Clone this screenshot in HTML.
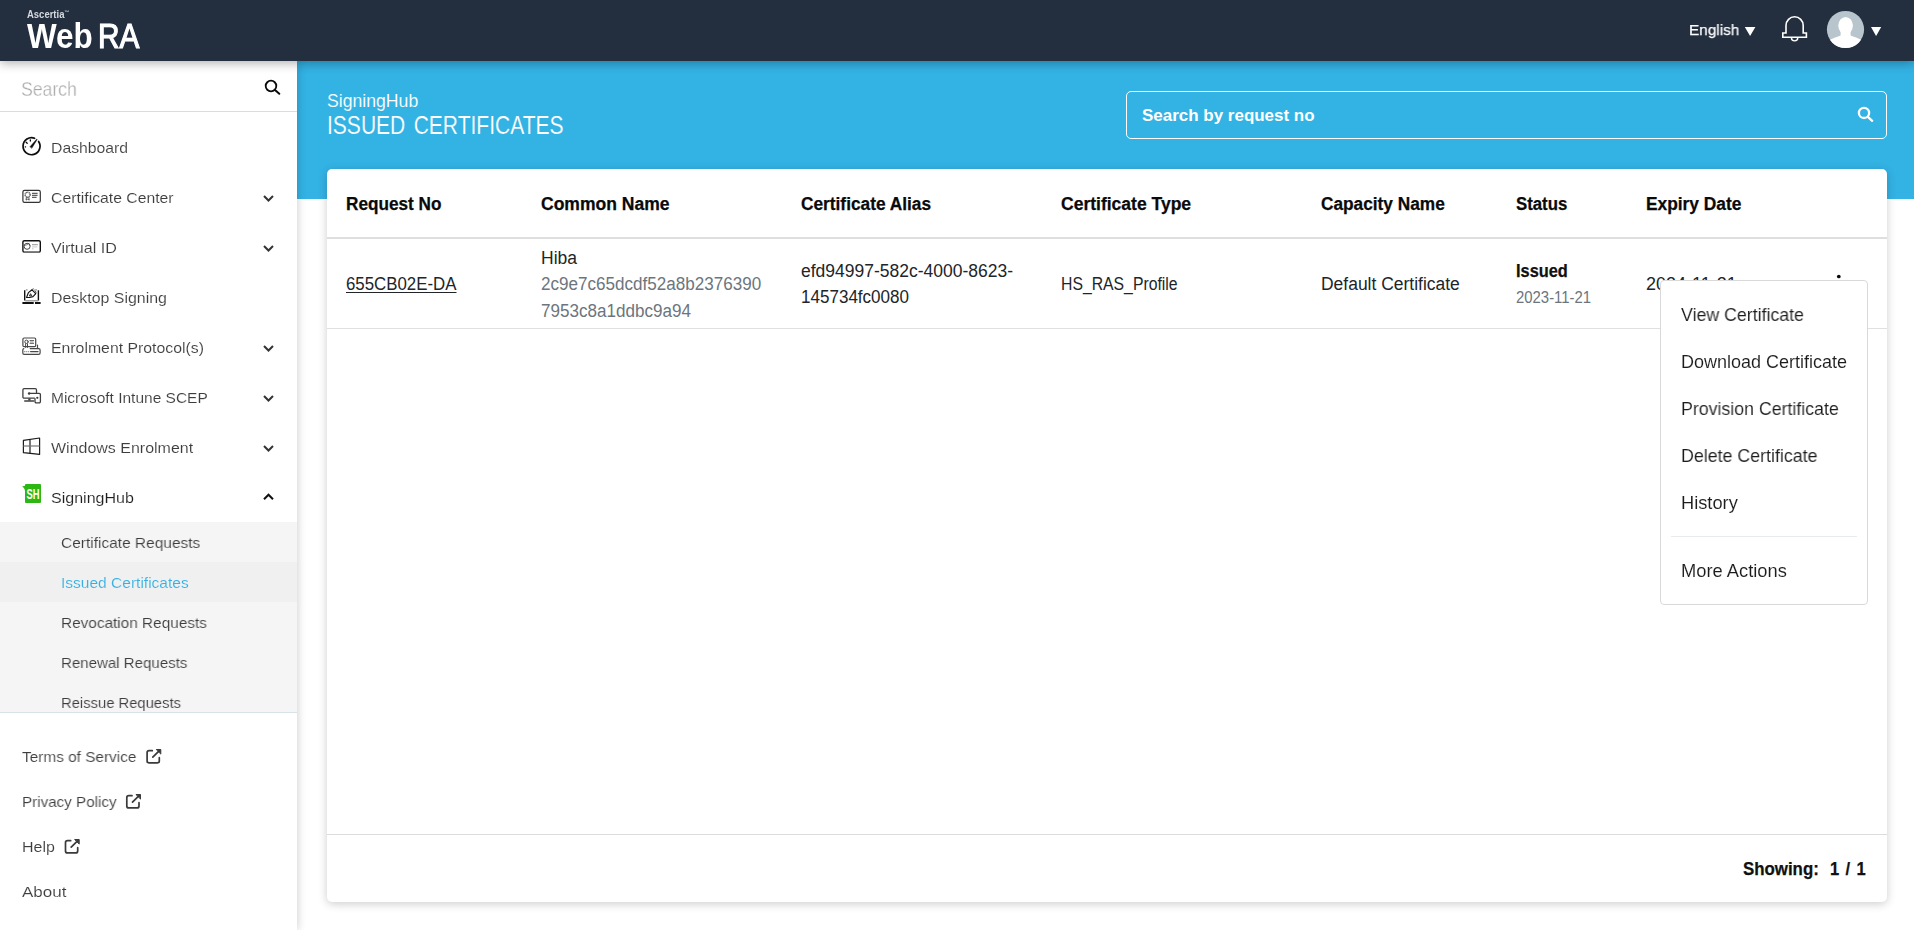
<!DOCTYPE html>
<html lang="en">
<head>
<meta charset="utf-8">
<title>WebRA - Issued Certificates</title>
<style>
html,body{margin:0;padding:0;}
body{width:1914px;height:930px;overflow:hidden;background:#fff;position:relative;font-family:"Liberation Sans",sans-serif;}
.abs{position:absolute;}
.t{position:absolute;white-space:pre;font-family:"Liberation Sans",sans-serif;}
#blue{left:297px;top:61px;width:1617px;height:138px;background:#33b2e4;}
#side{left:0;top:61px;width:297px;height:869px;background:#fff;box-shadow:0 0 9px rgba(0,0,0,.22);}
#hdr{left:0;top:0;width:1914px;height:61px;background:#232e3f;box-shadow:0 2px 10px rgba(0,0,0,.32);}
#sline{left:0;top:111px;width:297px;height:1px;background:#dcdcdc;}
#sub{left:0;top:522px;width:297px;height:190px;background:#f5f5f5;}
#subact{left:0;top:562px;width:297px;height:40px;background:#f0f0f0;}
#subline{left:0;top:712px;width:297px;height:1px;background:#d8e2e9;}
#card{left:327px;top:169px;width:1560px;height:733px;background:#fff;border-radius:5px;box-shadow:0 2px 10px rgba(0,0,0,.2);}
#thline{left:327px;top:237px;width:1560px;height:2px;background:#dedede;}
#trline{left:327px;top:328px;width:1560px;height:1px;background:#e0e0e0;}
#ftline{left:327px;top:834px;width:1560px;height:1px;background:#dcdcdc;}
#sbox{left:1126px;top:91px;width:759px;height:46px;border:1px solid #fff;border-radius:5px;}
#dd{left:1660px;top:280px;width:206px;height:323px;background:#fff;border:1px solid #d9d9d9;border-radius:4px;}
#ddline{left:1671px;top:536px;width:186px;height:1px;background:#e9ecef;}
svg{position:absolute;overflow:visible;}
</style>
</head>
<body>
<main>
<div id="blue" class="abs"></div>
<section id="card" class="abs"></section>
<div id="thline" class="abs"></div>
<div id="trline" class="abs"></div>
<div id="ftline" class="abs"></div>
<div id="sbox" class="abs"></div>
<svg class="abs" style="left:0;top:0" width="1914" height="930" viewBox="0 0 1914 930" fill="none">
<!-- main search icon -->
<g stroke="#fff" stroke-width="2.300" stroke-linecap="round">
<circle cx="1864" cy="112.900" r="5.100"/>
<path d="M1867.900 116.800l4.300 4"/>
</g>
<!-- kebab -->
<g fill="#0a0a0a"><circle cx="1838.800" cy="276.500" r="1.850"/><circle cx="1838.800" cy="282.300" r="1.850"/><circle cx="1838.800" cy="288.100" r="1.850"/></g>
</svg>
<span class="t" style="left:327.4px;top:88px;font-size:18.3px;line-height:26px;font-weight:400;color:#fff;letter-spacing:0.00px;transform:scaleX(0.9648);transform-origin:0 0;-webkit-text-stroke:.12px #33b2e4;">SigningHub</span>
<span class="t" style="left:327.4px;top:108px;font-size:25.2px;line-height:35px;font-weight:400;color:#fff;letter-spacing:0.00px;transform:scaleX(0.8349);transform-origin:0 0;-webkit-text-stroke:.15px #33b2e4;word-spacing:3px;">ISSUED CERTIFICATES</span>
<span class="t" style="left:1142.4px;top:104px;font-size:16.6px;line-height:23px;font-weight:700;color:#fff;letter-spacing:0.00px;transform:scaleX(1.0227);transform-origin:0 0;">Search by request no</span>
<span class="t" style="left:346.3px;top:192px;font-size:17.6px;line-height:25px;font-weight:700;color:#0a0a0a;letter-spacing:0.00px;transform:scaleX(0.9758);transform-origin:0 0;-webkit-text-stroke:.25px #0a0a0a;">Request No</span>
<span class="t" style="left:541.2px;top:192px;font-size:17.6px;line-height:25px;font-weight:700;color:#0a0a0a;letter-spacing:0.00px;transform:scaleX(0.9958);transform-origin:0 0;-webkit-text-stroke:.25px #0a0a0a;">Common Name</span>
<span class="t" style="left:801.1px;top:192px;font-size:17.6px;line-height:25px;font-weight:700;color:#0a0a0a;letter-spacing:0.00px;transform:scaleX(0.9823);transform-origin:0 0;-webkit-text-stroke:.25px #0a0a0a;">Certificate Alias</span>
<span class="t" style="left:1061.1px;top:192px;font-size:17.6px;line-height:25px;font-weight:700;color:#0a0a0a;letter-spacing:0.00px;transform:scaleX(0.9954);transform-origin:0 0;-webkit-text-stroke:.25px #0a0a0a;">Certificate Type</span>
<span class="t" style="left:1321.2px;top:192px;font-size:17.6px;line-height:25px;font-weight:700;color:#0a0a0a;letter-spacing:0.00px;transform:scaleX(0.9813);transform-origin:0 0;-webkit-text-stroke:.25px #0a0a0a;">Capacity Name</span>
<span class="t" style="left:1516.1px;top:192px;font-size:17.6px;line-height:25px;font-weight:700;color:#0a0a0a;letter-spacing:0.00px;transform:scaleX(0.9539);transform-origin:0 0;-webkit-text-stroke:.25px #0a0a0a;">Status</span>
<span class="t" style="left:1646.0px;top:192px;font-size:17.6px;line-height:25px;font-weight:700;color:#0a0a0a;letter-spacing:0.00px;transform:scaleX(0.9854);transform-origin:0 0;-webkit-text-stroke:.25px #0a0a0a;">Expiry Date</span>
<span class="t" style="left:346.1px;top:272px;font-size:18px;line-height:25px;font-weight:400;color:#212529;letter-spacing:0.00px;transform:scaleX(0.9358);transform-origin:0 0;text-decoration:underline;text-underline-offset:2px;">655CB02E-DA</span>
<span class="t" style="left:541.2px;top:246px;font-size:18px;line-height:25px;font-weight:400;color:#212529;letter-spacing:0.00px;transform:scaleX(0.9722);transform-origin:0 0;">Hiba</span>
<span class="t" style="left:541.2px;top:272px;font-size:18px;line-height:25px;font-weight:400;color:#6c757d;letter-spacing:0.00px;transform:scaleX(0.9487);transform-origin:0 0;">2c9e7c65dcdf52a8b2376390</span>
<span class="t" style="left:541.2px;top:299px;font-size:18px;line-height:25px;font-weight:400;color:#6c757d;letter-spacing:0.00px;transform:scaleX(0.9478);transform-origin:0 0;">7953c8a1ddbc9a94</span>
<span class="t" style="left:801.1px;top:259px;font-size:18px;line-height:25px;font-weight:400;color:#212529;letter-spacing:0.00px;transform:scaleX(0.9717);transform-origin:0 0;">efd94997-582c-4000-8623-</span>
<span class="t" style="left:801.1px;top:285px;font-size:18px;line-height:25px;font-weight:400;color:#212529;letter-spacing:0.00px;transform:scaleX(0.9465);transform-origin:0 0;">145734fc0080</span>
<span class="t" style="left:1061.1px;top:272px;font-size:18px;line-height:25px;font-weight:400;color:#212529;letter-spacing:0.00px;transform:scaleX(0.8763);transform-origin:0 0;">HS_RAS_Profile</span>
<span class="t" style="left:1321.2px;top:272px;font-size:18px;line-height:25px;font-weight:400;color:#212529;letter-spacing:0.00px;transform:scaleX(0.9702);transform-origin:0 0;">Default Certificate</span>
<span class="t" style="left:1516.1px;top:259px;font-size:18px;line-height:25px;font-weight:700;color:#111;letter-spacing:0.00px;transform:scaleX(0.9083);transform-origin:0 0;-webkit-text-stroke:.25px #111;">Issued</span>
<span class="t" style="left:1516.1px;top:286px;font-size:16.2px;line-height:23px;font-weight:400;color:#6c757d;letter-spacing:0.00px;transform:scaleX(0.9202);transform-origin:0 0;">2023-11-21</span>
<span class="t" style="left:1646.0px;top:272px;font-size:18px;line-height:25px;font-weight:400;color:#212529;letter-spacing:0.00px;transform:scaleX(0.9994);transform-origin:0 0;">2024-11-21</span>
<span class="t" style="left:1743.2px;top:857px;font-size:18px;line-height:25px;font-weight:700;color:#111;letter-spacing:0.00px;transform:scaleX(0.9360);transform-origin:0 0;-webkit-text-stroke:.25px #111;">Showing:</span>
<span class="t" style="left:1829.9px;top:857px;font-size:18px;line-height:25px;font-weight:700;color:#111;letter-spacing:0.00px;transform:scaleX(0.9172);transform-origin:0 0;-webkit-text-stroke:.25px #111;word-spacing:2px;">1 / 1</span>
</main>
<aside>
<div id="side" class="abs"></div>
<div id="sline" class="abs"></div>
<div id="sub" class="abs"></div>
<div id="subact" class="abs"></div>
<div id="subline" class="abs"></div>
<svg class="abs" style="left:0;top:0" width="1914" height="930" viewBox="0 0 1914 930" fill="none">
<!-- dashboard -->
<g stroke="#0d0d0d" stroke-width="1.700" stroke-linecap="round">
<path d="M38.600 141.450A8.500 8.500 0 1 1 34.600 138.260"/>
<path d="M29.980 146.690L36.760 139.020 37.240 139.380 31.920 148.110z" fill="#0d0d0d" stroke-width=".400" stroke-linejoin="round"/>
<path d="M30.350 139.800v1.300M26.100 142.300l1.100 1" stroke-width="1.300"/>
<circle cx="25.400" cy="146.900" r=".800" fill="#444" stroke="none"/>
</g>
<!-- certificate center -->
<g stroke="#333" stroke-width="1.2">
<rect x="22.900" y="190.300" width="17.400" height="12" rx="1.600"/>
<circle cx="27.600" cy="194.700" r="2.500" stroke-width="1.400" stroke-dasharray="1.100 .500" stroke="#555"/>
<path d="M26.500 197.200l-.500 2.900 1.600-.900 1.600.900-.500-2.900" stroke-width=".900" stroke="#444"/>
<path d="M32 193.300h5.600M32 195.300h5.600M32 197.300h4.600" stroke-width=".900" stroke="#222"/>
</g>
<!-- virtual id -->
<g stroke="#111" stroke-width="1.400">
<rect x="22.900" y="240.700" width="17.400" height="11.400" rx="1.400"/>
<path d="M23.600 252.300h16" stroke-width="1.200" stroke="#777"/>
<circle cx="27.100" cy="246.300" r="3" stroke-width=".900" stroke="#333"/>
<path d="M24.300 245.400c1.600-.100 3.400-.800 4.800-2.200M29 243.400c.400 1 .900 1.600 1.100 2.400" stroke-width=".700" stroke="#444"/>
<path d="M32 244.700h5.800" stroke="#888" stroke-width=".900"/>
<path d="M32 246.900h5.400M32 248.800h1.600" stroke="#bbb" stroke-width=".800"/>
</g>
<!-- desktop signing -->
<g stroke="#111" stroke-width="1.3">
<path d="M27.600 289.900h-1.800" stroke="#999"/>
<path d="M35.200 289.900h1.800" stroke="#999"/>
<path d="M24.700 290.200v10.200M38.400 290.200v10.200" stroke-width="1.400"/>
<path d="M25.200 300.800h13" stroke="#8a8a8a" stroke-width="1.200"/>
<path d="M22.400 303h11.300M35 303h5.600" stroke-width="1.900"/>
<path d="M26.600 297.400l1.800-4.800 3.600-2.800 3.800 3.800-2.800 3-3.400.9z" stroke-width="1.200" stroke-linejoin="round"/>
<path d="M32 289.800l1.200-1.300 3.200 4-1.300.9" stroke-width=".9" stroke-dasharray="1 .7"/>
<path d="M29.500 296l1-2.300 1.300 2z" stroke-width=".9"/>
</g>
<!-- enrolment protocols -->
<g stroke="#484848" stroke-width="1.2" stroke-linecap="round">
<rect x="22.9" y="338" width="12.800" height="8.600" rx="1.200"/>
<circle cx="26.500" cy="341.800" r="1.700" stroke-width="1"/>
<path d="M25.600 343.800v3.600M27.500 343.800v3.600" stroke-width="1"/>
<rect x="30" y="340.400" width="3.600" height="3" fill="#c4c4c4" stroke="none"/>
<path d="M30 340.500h3.600M30 343.400h3.600" stroke-width="1" stroke="#666"/>
<path d="M30.200 348.600H38.700a1.400 1.400 0 0 1 1.400 1.400v3a1.400 1.400 0 0 1-1.400 1.400H24.200a1.400 1.400 0 0 1-1.400-1.400v-3a1.400 1.400 0 0 1 1-1.350"/>
<path d="M37.500 345v3.500"/>
<path d="M24.300 351.600h.5M26.200 351.600h.5M28.200 351.600h.6" stroke="#999" stroke-width="1.100"/>
<path d="M30.600 351.600h7.400" stroke-width="1.300"/>
</g>
<!-- intune -->
<g stroke="#3f3f3f" stroke-width="1.300" stroke-linecap="round">
<path d="M36.500 392.400v-2.500a1.200 1.200 0 0 0-1.200-1.200H24.100a1.200 1.200 0 0 0-1.200 1.200v7a1.200 1.200 0 0 0 1.200 1.200H34.400"/>
<path d="M29.400 398.500v2" stroke-width="2.300" stroke-linecap="butt"/>
<path d="M24.800 401h8.800" stroke-width="1.600"/>
<path d="M29.100 393.400H39.200a1.200 1.200 0 0 1 1.200 1.200v7a1.200 1.200 0 0 1-1.200 1.200H36.200a1.200 1.200 0 0 1-1.200-1.200V398.600"/>
<circle cx="29.100" cy="393.400" r="1.250" fill="#3f3f3f" stroke="none"/>
<circle cx="37.300" cy="397.800" r="1.150" fill="#3f3f3f" stroke="none"/>
</g>
<!-- windows -->
<g stroke="#1c1c1c" stroke-width="1.2" stroke-linejoin="round">
<path d="M23.4 440.4L39.6 438v16.4l-16.2-1.7z"/>
<path d="M30 439.5v14"/>
<path d="M23.4 446h16.2" stroke="#777"/>
</g>
<!-- signinghub -->
<path d="M22 486.6l3-.9v5.4c-.3-2-1.200-3.600-3-4.500z" fill="#2db712"/>
<rect x="25" y="484" width="16" height="19" rx="1" fill="#2db712"/>
<text x="26.500" y="498.800" font-family="Liberation Sans, sans-serif" font-weight="700" font-size="14.500" fill="#fff" textLength="13" lengthAdjust="spacingAndGlyphs">SH</text>
<!-- chevrons -->
<g stroke="#333" stroke-width="2" stroke-linejoin="miter">
<path d="M264 196l4.500 4.500 4.500-4.500"/>
<path d="M264 246l4.500 4.500 4.500-4.500"/>
<path d="M264 346l4.500 4.500 4.500-4.500"/>
<path d="M264 396l4.500 4.500 4.500-4.500"/>
<path d="M264 446l4.500 4.500 4.500-4.500"/>
<path d="M264 499.200l4.500-4.500 4.500 4.500" stroke="#111"/>
</g>
<!-- sidebar search icon -->
<g stroke="#0a0a0a" stroke-width="1.800" stroke-linecap="round">
<circle cx="271" cy="86" r="5.300"/>
<path d="M275 90l4.300 3.800" stroke-width="2"/>
</g>
<!-- external link icons -->
<g id="ext" stroke="#3a3a3a" stroke-width="1.700" stroke-linecap="round" stroke-linejoin="round">
<path d="M152.300 750.700h-3.200a2 2 0 0 0-2 2v8.200a2 2 0 0 0 2 2h8.200a2 2 0 0 0 2-2v-3.200"/>
<path d="M152.800 757.200l6.600-6.600"/>
<path d="M156.600 749.500h4.200v4.200z" fill="#3a3a3a" stroke-width="1"/>
</g>
<use href="#ext" x="-20.300" y="45"/>
<use href="#ext" x="-81.600" y="90"/>
</svg>
<nav>
<span class="t" style="left:51.1px;top:137px;font-size:15.5px;line-height:22px;font-weight:400;color:#3d3d3d;letter-spacing:0.00px;transform:scaleX(1.0168);transform-origin:0 0;-webkit-text-stroke:.12px #fff;will-change:transform;">Dashboard</span>
<span class="t" style="left:51.1px;top:187px;font-size:15.5px;line-height:22px;font-weight:400;color:#3d3d3d;letter-spacing:0.00px;transform:scaleX(1.0165);transform-origin:0 0;-webkit-text-stroke:.12px #fff;will-change:transform;">Certificate Center</span>
<span class="t" style="left:51.1px;top:237px;font-size:15.5px;line-height:22px;font-weight:400;color:#3d3d3d;letter-spacing:0.00px;transform:scaleX(1.0367);transform-origin:0 0;-webkit-text-stroke:.12px #fff;will-change:transform;">Virtual ID</span>
<span class="t" style="left:51.1px;top:287px;font-size:15.5px;line-height:22px;font-weight:400;color:#3d3d3d;letter-spacing:0.00px;transform:scaleX(1.0268);transform-origin:0 0;-webkit-text-stroke:.12px #fff;will-change:transform;">Desktop Signing</span>
<span class="t" style="left:51.1px;top:337px;font-size:15.5px;line-height:22px;font-weight:400;color:#3d3d3d;letter-spacing:0.00px;transform:scaleX(1.0201);transform-origin:0 0;-webkit-text-stroke:.12px #fff;will-change:transform;">Enrolment Protocol(s)</span>
<span class="t" style="left:51.1px;top:387px;font-size:15.5px;line-height:22px;font-weight:400;color:#3d3d3d;letter-spacing:0.00px;transform:scaleX(1.0000);transform-origin:0 0;-webkit-text-stroke:.12px #fff;will-change:transform;">Microsoft Intune SCEP</span>
<span class="t" style="left:51.1px;top:437px;font-size:15.5px;line-height:22px;font-weight:400;color:#3d3d3d;letter-spacing:0.00px;transform:scaleX(1.0310);transform-origin:0 0;-webkit-text-stroke:.12px #fff;will-change:transform;">Windows Enrolment</span>
<span class="t" style="left:51.1px;top:487px;font-size:15.5px;line-height:22px;font-weight:400;color:#1f1f1f;letter-spacing:0.00px;transform:scaleX(1.0342);transform-origin:0 0;-webkit-text-stroke:.12px #fff;will-change:transform;">SigningHub</span>
<span class="t" style="left:61.0px;top:532px;font-size:15.5px;line-height:22px;font-weight:400;color:#3d3d3d;letter-spacing:0.00px;transform:scaleX(0.9974);transform-origin:0 0;-webkit-text-stroke:.12px #f5f5f5;will-change:transform;">Certificate Requests</span>
<span class="t" style="left:61.0px;top:572px;font-size:15.5px;line-height:22px;font-weight:400;color:#35b0e2;letter-spacing:0.00px;transform:scaleX(1.0016);transform-origin:0 0;-webkit-text-stroke:.12px #f0f0f0;will-change:transform;">Issued Certificates</span>
<span class="t" style="left:61.0px;top:612px;font-size:15.5px;line-height:22px;font-weight:400;color:#3d3d3d;letter-spacing:0.00px;transform:scaleX(0.9902);transform-origin:0 0;-webkit-text-stroke:.12px #f5f5f5;will-change:transform;">Revocation Requests</span>
<span class="t" style="left:61.0px;top:652px;font-size:15.5px;line-height:22px;font-weight:400;color:#3d3d3d;letter-spacing:0.00px;transform:scaleX(0.9715);transform-origin:0 0;-webkit-text-stroke:.12px #f5f5f5;will-change:transform;">Renewal Requests</span>
<span class="t" style="left:61.0px;top:692px;font-size:15.5px;line-height:22px;font-weight:400;color:#3d3d3d;letter-spacing:0.00px;transform:scaleX(0.9539);transform-origin:0 0;-webkit-text-stroke:.12px #f5f5f5;will-change:transform;">Reissue Requests</span>
<span class="t" style="left:21.8px;top:746px;font-size:15.5px;line-height:22px;font-weight:400;color:#3d3d3d;letter-spacing:0.00px;transform:scaleX(0.9920);transform-origin:0 0;-webkit-text-stroke:.12px #fff;will-change:transform;">Terms of Service</span>
<span class="t" style="left:21.8px;top:791px;font-size:15.5px;line-height:22px;font-weight:400;color:#3d3d3d;letter-spacing:0.00px;transform:scaleX(0.9806);transform-origin:0 0;-webkit-text-stroke:.12px #fff;will-change:transform;">Privacy Policy</span>
<span class="t" style="left:21.8px;top:836px;font-size:15.5px;line-height:22px;font-weight:400;color:#3d3d3d;letter-spacing:0.00px;transform:scaleX(1.0317);transform-origin:0 0;-webkit-text-stroke:.12px #fff;will-change:transform;">Help</span>
<span class="t" style="left:21.8px;top:881px;font-size:15.5px;line-height:22px;font-weight:400;color:#3d3d3d;letter-spacing:0.00px;transform:scaleX(1.0959);transform-origin:0 0;-webkit-text-stroke:.12px #fff;will-change:transform;">About</span>
<span class="t" style="left:20.8px;top:75px;font-size:19.8px;line-height:28px;font-weight:400;color:#a6a6a6;letter-spacing:0.00px;transform:scaleX(0.8901);transform-origin:0 0;-webkit-text-stroke:.35px #fff;will-change:transform;">Search</span>
</nav>
</aside>
<header>
<div id="hdr" class="abs"></div>
<svg class="abs" style="left:0;top:0" width="1914" height="930" viewBox="0 0 1914 930" fill="none">
<!-- header: triangles, bell, avatar -->
<path d="M1744.800 26.900h10.600l-5.300 9z" fill="#fff"/>
<path d="M1871 26.900h10.200l-5.100 9z" fill="#fff"/>
<g stroke="#fff" stroke-width="1.600" stroke-linejoin="miter">
<path d="M1786 33H1782.800V37.200H1806.400V33H1803.200V25.600a8.600 8.800 0 0 0-17.200 0z"/>
<path d="M1791.400 37.800a3.200 3.100 0 0 0 6.400 0" stroke-width="1.400"/>
</g>
<clipPath id="avc"><circle cx="1845.500" cy="29.500" r="18.600"/></clipPath>
<circle cx="1845.500" cy="29.500" r="18.600" fill="#b8c5cc"/>
<g clip-path="url(#avc)" fill="#fff">
<ellipse cx="1845.600" cy="25.600" rx="7.300" ry="8.700"/>
<path d="M1840.600 30h10v5.400c3 1.700 7.800 2.300 11 4.600v10h-32v-10c3.200-2.300 8-2.900 11-4.600z"/>
</g>
</svg>
<span class="t" style="left:26.7px;top:7px;font-size:10.6px;line-height:15px;font-weight:700;color:#d6dae0;letter-spacing:0.00px;transform:scaleX(0.8945);transform-origin:0 0;">Ascertia</span>
<span class="t" style="left:63.8px;top:9px;font-size:5px;line-height:7px;font-weight:700;color:#c8ccd4;letter-spacing:0.00px;transform:scaleX(1.0600);transform-origin:0 0;">™</span>
<span class="t" style="left:26.9px;top:10px;font-size:35.4px;line-height:50px;font-weight:700;color:#fff;letter-spacing:0.00px;transform:translateY(0.6px) scaleX(0.8883);transform-origin:0 0;">Web</span>
<span class="t" style="left:98.1px;top:11px;font-size:35px;line-height:49px;font-weight:400;color:#fff;letter-spacing:0.00px;transform:scaleX(0.8514);transform-origin:0 0;-webkit-text-stroke:1.2px #fff;">RA</span>
<span class="t" style="left:1689.0px;top:19px;font-size:15.5px;line-height:22px;font-weight:400;color:#fff;letter-spacing:0.00px;transform:scaleX(0.9893);transform-origin:0 0;-webkit-text-stroke:.25px #fff;will-change:transform;">English</span>
</header>
<div role="menu">
<div id="dd" class="abs"></div>
<div id="ddline" class="abs"></div>
<span class="t" style="left:1681.4px;top:303px;font-size:18px;line-height:25px;font-weight:400;color:#1c1c1c;letter-spacing:0.00px;transform:scaleX(0.9854);transform-origin:0 0;-webkit-text-stroke:.08px #fff;will-change:transform;">View Certificate</span>
<span class="t" style="left:1681.4px;top:350px;font-size:18px;line-height:25px;font-weight:400;color:#1c1c1c;letter-spacing:0.00px;transform:scaleX(1.0001);transform-origin:0 0;-webkit-text-stroke:.08px #fff;will-change:transform;">Download Certificate</span>
<span class="t" style="left:1681.4px;top:397px;font-size:18px;line-height:25px;font-weight:400;color:#1c1c1c;letter-spacing:0.00px;transform:scaleX(0.9859);transform-origin:0 0;-webkit-text-stroke:.08px #fff;will-change:transform;">Provision Certificate</span>
<span class="t" style="left:1681.3px;top:444px;font-size:18px;line-height:25px;font-weight:400;color:#1c1c1c;letter-spacing:0.00px;transform:scaleX(0.9887);transform-origin:0 0;-webkit-text-stroke:.08px #fff;will-change:transform;">Delete Certificate</span>
<span class="t" style="left:1681.3px;top:491px;font-size:18px;line-height:25px;font-weight:400;color:#1c1c1c;letter-spacing:0.00px;transform:scaleX(1.0140);transform-origin:0 0;-webkit-text-stroke:.08px #fff;will-change:transform;">History</span>
<span class="t" style="left:1681.4px;top:559px;font-size:18px;line-height:25px;font-weight:400;color:#1c1c1c;letter-spacing:0.00px;transform:scaleX(1.0168);transform-origin:0 0;-webkit-text-stroke:.08px #fff;will-change:transform;">More Actions</span>
</div>
</body>
</html>
